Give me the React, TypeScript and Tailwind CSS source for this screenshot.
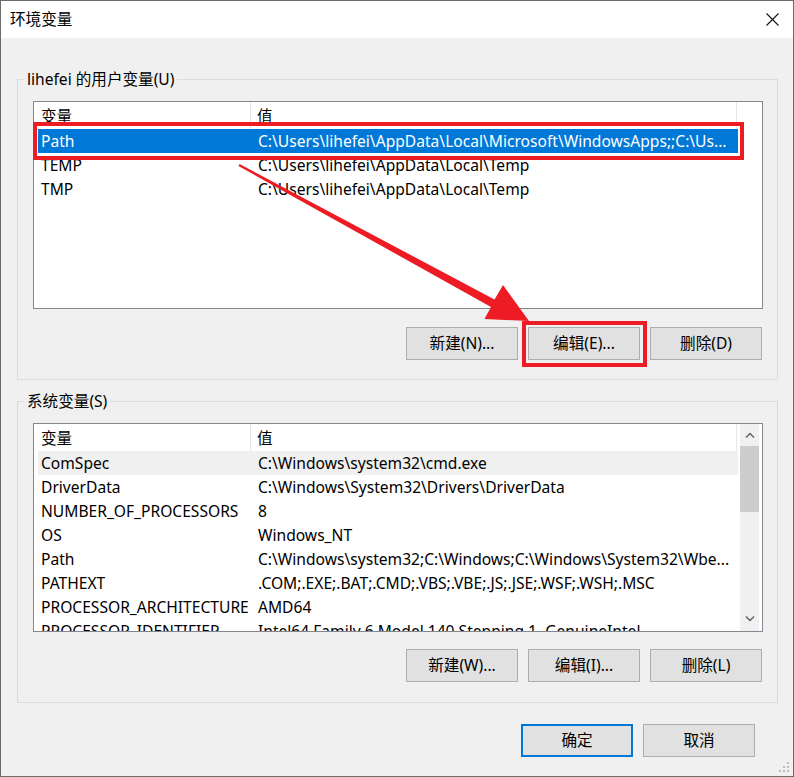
import React from "react";

const userVars = [
  { name: "Path", value: "C:\\Users\\lihefei\\AppData\\Local\\Microsoft\\WindowsApps;;C:\\Us..." },
  { name: "TEMP", value: "C:\\Users\\lihefei\\AppData\\Local\\Temp" },
  { name: "TMP", value: "C:\\Users\\lihefei\\AppData\\Local\\Temp" },
];

const sysVars = [
  { name: "ComSpec", value: "C:\\Windows\\system32\\cmd.exe" },
  { name: "DriverData", value: "C:\\Windows\\System32\\Drivers\\DriverData" },
  { name: "NUMBER_OF_PROCESSORS", value: "8" },
  { name: "OS", value: "Windows_NT" },
  { name: "Path", value: "C:\\Windows\\system32;C:\\Windows;C:\\Windows\\System32\\Wbe..." },
  { name: "PATHEXT", value: ".COM;.EXE;.BAT;.CMD;.VBS;.VBE;.JS;.JSE;.WSF;.WSH;.MSC" },
  { name: "PROCESSOR_ARCHITECTURE", value: "AMD64" },
  { name: "PROCESSOR_IDENTIFIER", value: "Intel64 Family 6 Model 140 Stepping 1, GenuineIntel" },
];

const Button = ({ label, primary }: { label: string; primary?: boolean }) => (
  <div
    className={`w-[112px] h-[33px] flex items-center justify-center pt-[1px] bg-[#e1e1e1] text-[#000] ${
      primary ? "border-2 border-[#0078d7]" : "border border-[#adadad]"
    }`}
  >
    {label}
  </div>
);

const Header = () => (
  <div className="flex h-[27px] items-center text-[#000]">
    <div className="w-[213px] h-full flex items-center pl-[3px] pt-[3px] border-r border-[#e5e5e5]">变量</div>
    <div className="w-[486px] h-full flex items-center pl-[6px] pt-[3px] border-r border-[#e5e5e5]">值</div>
  </div>
);

const Row = ({
  name,
  value,
  selected,
  hover,
}: {
  name: string;
  value: string;
  selected?: boolean;
  hover?: boolean;
}) => (
  <div
    className={`flex h-[24px] w-[700px] items-center pt-[2px] whitespace-nowrap overflow-hidden ${
      selected ? "bg-[#0078d7] text-white" : hover ? "bg-[#f0f0f0] text-black" : "text-black"
    }`}
  >
    <div className="w-[220px] shrink-0 pl-[3px]">{name}</div>
    <div className="shrink-0">{value}</div>
  </div>
);

const Chevron = ({ up }: { up?: boolean }) => (
  <svg width="10" height="6" viewBox="0 0 10 6" className="block">
    <path
      d={up ? "M1 5.5 L5 1.5 L9 5.5" : "M1 0.5 L5 4.5 L9 0.5"}
      fill="none"
      stroke="#606060"
      strokeWidth="1.4"
    />
  </svg>
);

const Group = ({
  label,
  height,
  children,
}: {
  label: string;
  height: string;
  children: React.ReactNode;
}) => (
  <div className={`relative w-[761px] ${height} border border-[#dcdcdc] ml-[16px] pl-[15px] pt-[21px]`}>
    <div className="absolute left-[6px] top-[-12px] px-[3px] bg-[#f0f0f0] leading-[22px]">{label}</div>
    {children}
  </div>
);

export default function App() {
  return (
    <div
      className="relative w-[794px] h-[777px] bg-[#f0f0f0] border border-[#6b6b6b] text-[15.6px] overflow-hidden"
      style={{ fontFamily: '"Noto Sans", "Noto Sans CJK SC", sans-serif' }}
    >
      {/* title bar */}
      <div className="h-[37px] bg-white flex items-center justify-between pl-[9px] pr-[14px]">
        <span className="text-[#000]">环境变量</span>
        <svg width="13" height="13" viewBox="0 0 13 13">
          <path d="M0.5 0.5 L12.5 12.5 M12.5 0.5 L0.5 12.5" stroke="#111" strokeWidth="1.1" />
        </svg>
      </div>

      <div className="pt-[41px]">
        <Group label="lihefei 的用户变量(U)" height="h-[301px]">
          <div className="w-[730px] h-[208px] bg-white border border-[#828790] pl-[4px]">
            <Header />
            {userVars.map((v, i) => (
              <Row key={v.name} name={v.name} value={v.value} selected={i === 0} />
            ))}
          </div>
          <div className="flex justify-end gap-[10px] w-[730px] pr-[1px] mt-[18px]">
            <Button label="新建(N)..." />
            <Button label="编辑(E)..." />
            <Button label="删除(D)" />
          </div>
        </Group>

        <div className="h-[21px]" />

        <Group label="系统变量(S)" height="h-[302px]">
          <div className="relative flex w-[730px] h-[209px] bg-white border border-[#828790] pl-[4px] overflow-hidden">
            <div className="w-[700px]">
              <Header />
              {sysVars.map((v, i) => (
                <Row key={v.name} name={v.name} value={v.value} hover={i === 0} />
              ))}
            </div>
            <div className="ml-[2px] w-[19px] h-full bg-[#f0f0f0] flex flex-col items-center">
              <div className="h-[22px] w-full flex items-center justify-center">
                <Chevron up />
              </div>
              <div className="w-full h-[66px] bg-[#cdcdcd]" />
              <div className="flex-1" />
              <div className="h-[22px] w-full flex items-center justify-center mb-[1px]">
                <Chevron />
              </div>
            </div>
          </div>
          <div className="flex justify-end gap-[10px] w-[730px] pr-[1px] mt-[17px]">
            <Button label="新建(W)..." />
            <Button label="编辑(I)..." />
            <Button label="删除(L)" />
          </div>
        </Group>

        <div className="flex justify-end gap-[10px] pr-[38px] mt-[21px]">
          <Button label="确定" primary />
          <Button label="取消" />
        </div>
      </div>

      {/* red annotations */}
      <div className="absolute left-[32px] top-[121px] w-[711px] h-[38px] border-[4px] border-[#ed1c24]" />
      <div className="absolute left-[521px] top-[320px] w-[125px] h-[46px] border-[4px] border-[#ed1c24]" />
      <svg className="absolute left-0 top-0 pointer-events-none" width="794" height="777">
        <polygon
          points="238.5,163 493.5,298.5 502,284 528,320 483.5,318 490,306 237.5,165"
          fill="#ed1c24"
        />
      </svg>

      {/* resize grip */}
      <svg className="absolute right-[3px] bottom-[3px]" width="12" height="12" viewBox="0 0 12 12">
        <rect x="9" y="1" width="2" height="2" fill="#bcbcbc" />
        <rect x="5" y="5" width="2" height="2" fill="#bcbcbc" />
        <rect x="9" y="5" width="2" height="2" fill="#bcbcbc" />
        <rect x="1" y="9" width="2" height="2" fill="#bcbcbc" />
        <rect x="5" y="9" width="2" height="2" fill="#bcbcbc" />
        <rect x="9" y="9" width="2" height="2" fill="#bcbcbc" />
      </svg>
    </div>
  );
}
